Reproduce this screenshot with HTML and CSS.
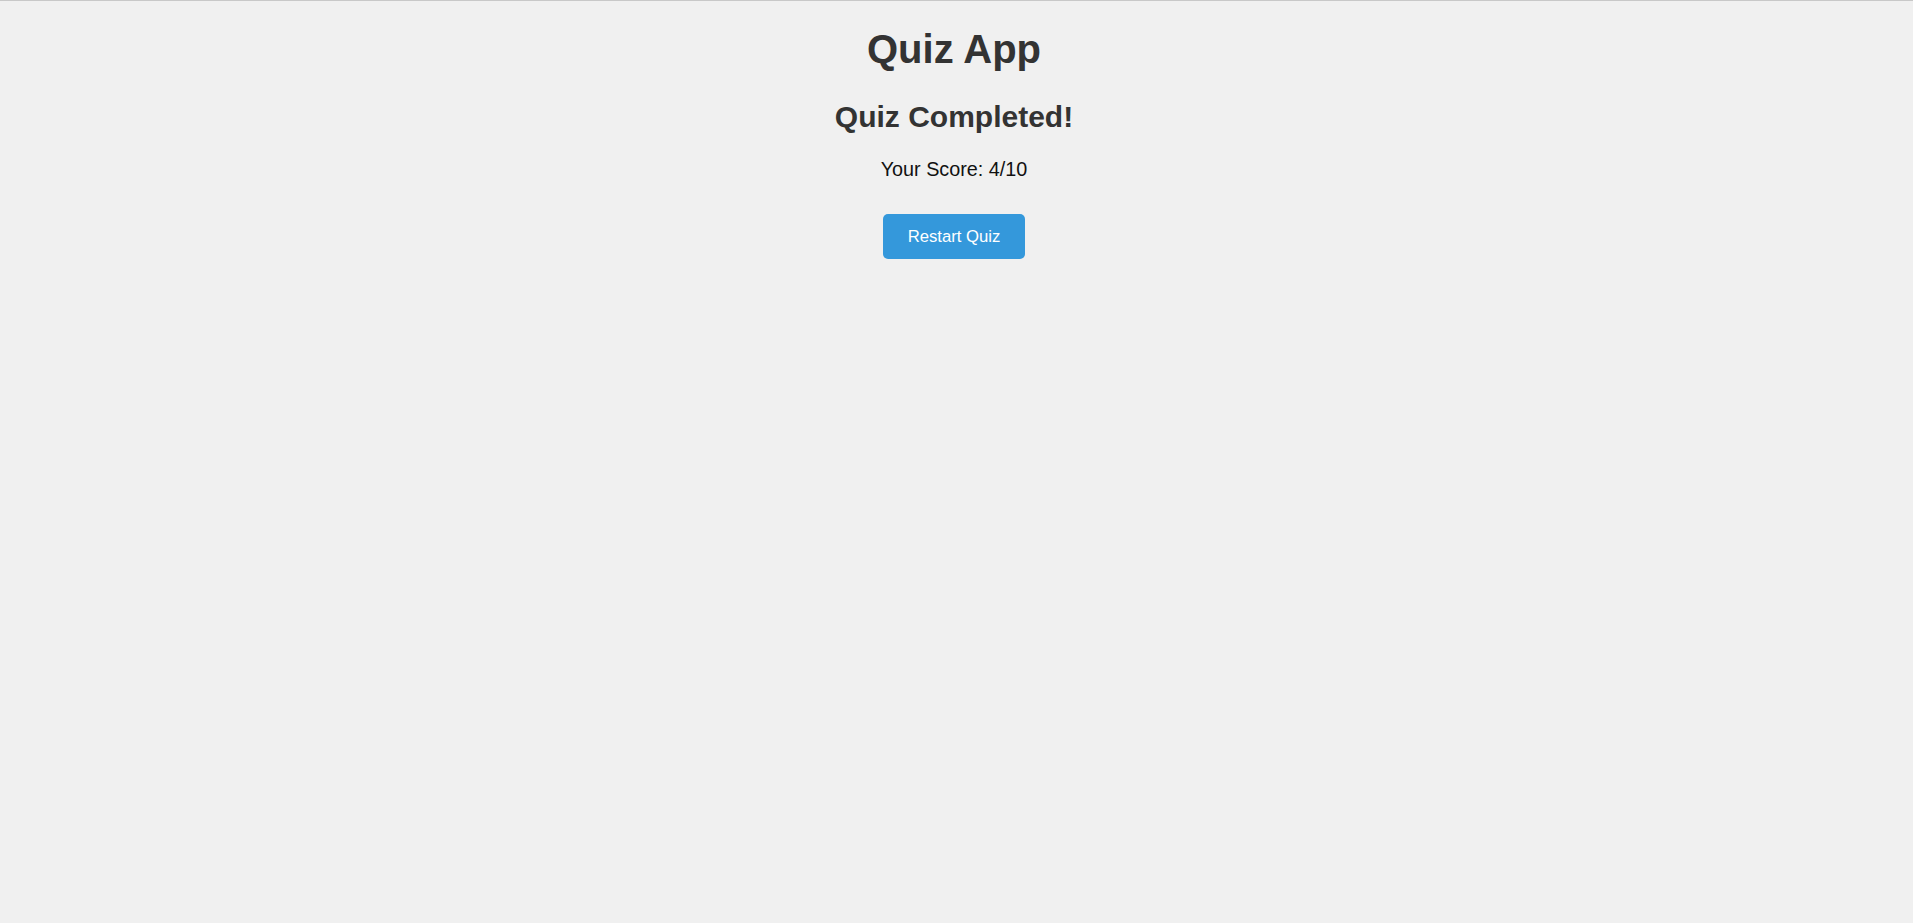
FILE: index.html
```html
<!DOCTYPE html>
<html lang="en">
<head>
<meta charset="utf-8">
<title>Quiz App</title>
<link rel="stylesheet" href="styles.css">
</head>
<body>
<div class="app">
  <h1 class="title">Quiz App</h1>
  <div class="result">
    <h2 class="result-title">Quiz Completed!</h2>
    <p class="score">Your Score: 4/10</p>
    <button class="restart-btn" type="button">Restart Quiz</button>
  </div>
</div>
</body>
</html>
```

FILE: styles.css
```css
html, body {
  margin: 0;
  padding: 0;
}
body {
  background: #f0f0f0;
  border-top: 1px solid #c8c8c8;
  font-family: "Liberation Sans", Arial, sans-serif;
  min-height: 922px;
  box-sizing: border-box;
}
.app {
  display: flex;
  flex-direction: column;
  align-items: center;
  padding-top: 25px;
  padding-right: 5px;
}
.title {
  margin: 0;
  font-size: 40px;
  line-height: 46px;
  font-weight: bold;
  color: #333;
}
.result {
  display: flex;
  flex-direction: column;
  align-items: center;
  margin-top: 28px;
}
.result-title {
  margin: 0;
  font-size: 30px;
  line-height: 34px;
  font-weight: bold;
  color: #333;
}
.score {
  margin: 24px 0 0;
  font-size: 19.8px;
  line-height: 22px;
  color: #111;
}
.restart-btn {
  margin-top: 34px;
  background: #3498db;
  color: #fff;
  border: none;
  border-radius: 5px;
  font-family: "Liberation Sans", Arial, sans-serif;
  font-size: 16.7px;
  line-height: 19px;
  padding: 13px 25px;
  cursor: pointer;
}
```
